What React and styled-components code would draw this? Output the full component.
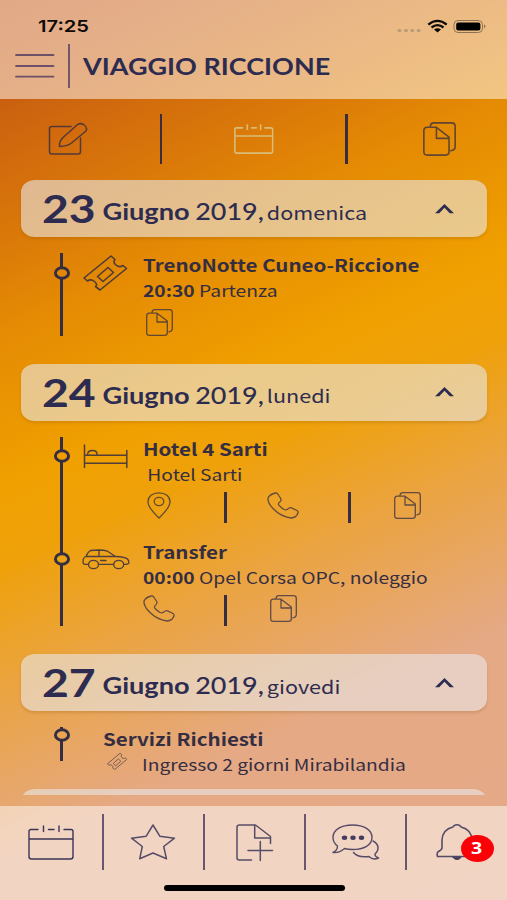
import React from "react";
import styled, { createGlobalStyle } from "styled-components";

const NAVY = "#2d2c50";
const INK = "#352e42";
const SOURCE = '"Noto Sans CJK SC", "Noto Sans", sans-serif';
const LATO = 'Lato, "Open Sans", sans-serif';

const GlobalStyle = createGlobalStyle`
  * { box-sizing: border-box; }
  body { margin: 0; overflow: hidden; }
`;

const Screen = styled.div`
  width: 507px;
  height: 900px;
  display: flex;
  flex-direction: column;
  overflow: hidden;
  color: ${NAVY};
  font-family: ${SOURCE};
  background: linear-gradient(155deg, #c4520f 0%, #ca6010 9%, #d6720b 18%, #e48a04 29%, #f0a000 43%, #efa10a 50%, #eaa446 62%, #e5a985 76%, #e5a988 100%);
`;

/* Wide lettering: glyphs are stretched horizontally from their left edge. */
const Wide = styled.span`
  display: block;
  width: max-content;
  white-space: pre;
  transform: scaleX(${(p) => p.$scale || 1.219});
  transform-origin: 0 50%;
`;

const Header = styled.header`
  height: 99px;
  flex: none;
  background: rgba(255, 255, 255, 0.5);
`;

const StatusBar = styled.div`
  height: 44px;
  padding: 15px 20px 0 38px;
  display: flex;
  justify-content: space-between;
  color: #0d0a08;
  font: 600 16.5px/23px Inter, sans-serif;
`;

const StatusIcons = styled.svg`
  width: 91px;
  height: 16px;
  margin-top: 3px;
`;

const TitleBar = styled.div`
  height: 44px;
  padding-left: 15px;
  display: flex;
  align-items: center;
`;

const HeaderRule = styled.div`
  width: 2px;
  height: 44px;
  margin: 0 13px 0 14px;
  background: #73566a;
`;

const Title = styled.h1`
  margin: 0;
  font: 700 22.15px/44px ${LATO};
  padding-top: 2px;
`;

const Tabs = styled.nav`
  height: 81px;
  flex: none;
  display: flex;
  align-items: center;
  padding: 0 50px 2px 48px;
`;

const TabRule = styled.div`
  width: 2.5px;
  height: 50px;
  background: #382d3c;
  margin: ${(p) => p.$margin};
`;

const List = styled.main`
  height: 615px;
  flex: none;
  overflow: hidden;
  padding: 0 20px 0 21px;
`;

const DayCard = styled.section`
  height: 57px;
  border-radius: 14px / 12px;
  background: rgba(231, 231, 231, 0.6);
  box-shadow: 0 2px 3px rgba(130, 80, 10, 0.22);
  display: flex;
  justify-content: space-between;
  padding: 0 32px 0 20.5px;
`;

const DateLine = styled(Wide)`
  height: 57px;
  line-height: 57px;
  font-family: ${LATO};
`;

const DayNumber = styled.span`
  font-size: 38px;
  font-weight: 700;
`;

const Month = styled.span`
  margin-left: 5.5px;
  font-size: 22.3px;
  line-height: 24px;
  font-weight: 700;
  vertical-align: 3px;
`;

const Year = styled.span`
  margin-left: 4.5px;
  font-size: 22.1px;
  line-height: 24px;
  font-weight: 500;
  vertical-align: 3px;
`;

const Weekday = styled.span`
  margin-left: 2.5px;
  font: 400 17.7px/20px ${SOURCE};
  vertical-align: 3.5px;
`;

const Caret = styled.svg`
  width: 21px;
  height: 12px;
  margin-top: 22.5px;
`;

const Items = styled.div`
  padding: 16px 0 ${(p) => p.$bottom}px 31.5px;
`;

const Item = styled.article`
  display: flex;
  height: ${(p) => p.$height}px;
`;

const Rail = styled.div`
  position: relative;
  flex: none;
  width: 18px;
  display: flex;
  justify-content: center;
  &::before {
    content: "";
    width: 3px;
    background: ${INK};
  }
`;

const RailNode = styled.svg`
  position: absolute;
  left: 0;
  top: ${(p) => p.$top}px;
  width: 18px;
  height: 14px;
`;

const Kind = styled.div`
  flex: none;
  width: 72.5px;
  padding: ${(p) => p.$top}px 0 0 12px;
`;

const Body = styled.div`
  margin: -1px 0 0 ${(p) => p.$indent || 0}px;
  color: ${INK};
`;

const Heading = styled(Wide).attrs({ as: "h2" })`
  margin: 0;
  height: 26px;
  font-size: 16.85px;
  font-weight: 700;
  line-height: 26px;
`;

const Detail = styled(Wide)`
  height: 25px;
  font-size: 15.8px;
  font-weight: 400;
  line-height: 25px;
  b { font-weight: 700; }
`;

const Service = styled.div`
  display: flex;
  gap: 15px;
  padding-left: 4px;
  > svg { margin-top: 1px; }
`;

const Actions = styled.div`
  display: flex;
  margin-top: 5.5px;
`;

const Action = styled.div`
  width: 32px;
  display: flex;
  justify-content: center;
`;

const ActionRule = styled.div`
  width: 3px;
  height: 31px;
  margin: 0 40.5px 0 48.5px;
  background: ${INK};
`;

const Glyph = styled.svg`
  display: block;
  flex: none;
  width: ${(p) => p.$w}px;
  height: ${(p) => p.$h}px;
  fill: none;
  stroke: ${(p) => p.$color || INK};
  stroke-width: ${(p) => p.$stroke || 1.3};
  stroke-linecap: round;
  stroke-linejoin: round;
  overflow: visible;
  opacity: ${(p) => p.$opacity || 0.85};
`;

const Footer = styled.footer`
  margin-top: auto;
  height: 94px;
  flex: none;
  background: rgba(255, 255, 255, 0.5);
`;

const FooterNav = styled.nav`
  display: grid;
  grid-template-columns: 103.5px repeat(3, 101px) 1fr;
  height: 72px;
  padding-top: 8px;
`;

const FooterSlot = styled.div`
  position: relative;
  height: 56px;
  display: flex;
  justify-content: center;
  align-items: center;
  border-right: ${(p) => (p.$last ? "0" : "2px solid #6a566e")};
`;

const Badge = styled.div`
  position: absolute;
  left: 54px;
  top: 20.5px;
  width: 33px;
  height: 27px;
  border-radius: 50%;
  background: #fb0007;
  color: #fff;
  display: flex;
  justify-content: center;
  font: 700 16px/26px "Open Sans", sans-serif;
  ${Wide} { transform-origin: 50% 50%; }
`;

const HomeIndicator = styled.div`
  width: 181px;
  height: 6px;
  margin: 7px 0 0 164px;
  border-radius: 3px;
  background: #000;
`;

const MenuIcon = () => (
  <Glyph viewBox="0 0 39 24" $w={39} $h={24} $color="#6d5068" $stroke={1.8} $opacity={1}>
    <path d="M1 1H38.5M1 12H38.5M1 22.7H38.5" />
  </Glyph>
);

const EditIcon = () => (
  <Glyph viewBox="0 0 40 34" $w={40} $h={34} $stroke={1.5} $opacity={0.8}>
    <path d="M23 4.500H4Q1.500 4.500 1.500 7V29.500Q1.500 32 4 32H30Q32.500 32 32.500 29.500V16" />
    <path d="M11.500 24.500Q11 19.500 15 15.500L29 3Q32 .5 35.500 2.500Q40 5.500 38 9L23.500 21Q20 24 11.500 24.500Z" />
  </Glyph>
);

const CalendarIcon = ({ w, h, color, stroke }) => (
  <Glyph viewBox="0 0 46 35" preserveAspectRatio="none" $w={w} $h={h} $color={color} $stroke={stroke} $opacity={1}>
    <path d="M10 4.500H3Q1 4.500 1 6.500V31.500Q1 34 3.500 34H42.500Q45 34 45 31.500V6.500Q45 4.500 43 4.500H36M20.500 4.500H26M1 14H45" />
    <path d="M15.500 1V6.500M31 1V6.500" />
  </Glyph>
);

const DocsIcon = ({ w = 27, h = 27, stroke, opacity = 0.75 }) => (
  <Glyph viewBox="0 0 27 27" preserveAspectRatio="none" $w={w} $h={h} $stroke={stroke} $opacity={opacity}>
    <path d="M6 3.500Q6.200.7 9 .7H23.500Q26.300.7 26.300 3.500V19.500Q26.300 22.500 22.800 22.800" />
    <path d="M3.200 4.200H11L21.300 12V23.700Q21.300 26.300 18.500 26.300H3.400Q.7 26.300.7 23.700V7Q.7 4.300 3.200 4.200ZM11 4.200V13H21.300" />
  </Glyph>
);

const TicketIcon = ({ w, h, stroke, opacity }) => (
  <Glyph viewBox="0 0 44 36" preserveAspectRatio="none" $w={w} $h={h} $stroke={stroke} $opacity={opacity}>
    <path d="M28 1L1 23L4.500 26Q8 23.500 11.500 26.500T12.500 31.500L17 35L43.500 13.500L40 10.500Q36.500 13 33 10T32 4.500Z" />
    <path d="M14.500 21.500L25 12.500L30.500 17.500L20 26.500Z" />
  </Glyph>
);

const BedIcon = () => (
  <Glyph viewBox="0 0 45 25" $w={45} $h={25} $stroke={1.5}>
    <path d="M1.500 1V23.500M43.800 6.500V23.500M1.500 11.200H43.800M1.500 19.300H43.800M4.500 11Q4.500 6.500 9.500 6.500T14 11" />
  </Glyph>
);

const CarIcon = () => (
  <Glyph viewBox="1 0 48 21" $w={48} $h={21}>
    <path d="M6.300 15.300H2.700Q1 15 1 12.500Q1 8.500 4 7.500Q6 2.800 8.500 1.500Q20 .2 25.500 2.200L33.500 7.500Q43.500 8 45.500 10Q47.500 12.500 46.500 14.500Q45.500 15.500 42 15.300M16.500 15.300H31.500M4 7.500H33.500M17 1.500V7.500M18.500 11.500H24" />
    <ellipse cx="11.500" cy="15.500" rx="5" ry="4.200" />
    <ellipse cx="36.700" cy="15.500" rx="5" ry="4.200" />
  </Glyph>
);

const PinIcon = () => (
  <Glyph viewBox="0 0 24 27" $w={24} $h={27} $opacity={0.75}>
    <path d="M12 26C8.500 22.500 1 16 1 9.800C1 4.500 5.500.8 12 .8S23 4.500 23 9.800C23 16 15.500 22.500 12 26Z" />
    <ellipse cx="12" cy="9.500" rx="4.800" ry="4.100" />
  </Glyph>
);

const PhoneIcon = () => (
  <Glyph viewBox="0 0 32 27" $w={32} $h={27} $opacity={0.75}>
    <path d="M8.500 1Q3 2 1 6Q.5 11 6 16.500Q14 24.800 24 26Q29.500 25.800 31 20.800Q31.500 19.500 30 18.500L24.500 15.800Q22.500 15.300 20.800 17Q19 18.300 17 17.500Q12.500 14.500 11.500 12.500Q11 11 13 9.700Q14.500 8.500 13.800 6.500L10.700 2Q9.800.8 8.500 1Z" />
  </Glyph>
);

const StarIcon = () => (
  <Glyph viewBox="0 0 46 36" $w={46} $h={36} $color="#3b3557" $stroke={1.5}>
    <path d="M23 1L29.800 12.200L44.500 14.200L33.700 22.500L36.500 34.800L23 29L9.700 34.800L12.300 22.500L1.500 14.200L16.200 12.200Z" />
  </Glyph>
);

const AddDocIcon = () => (
  <Glyph viewBox="0 0 37 37" $w={37} $h={37} $color="#3b3557" $stroke={1.5}>
    <path d="M15.500 36H3.500Q1 36 1 34V3Q1 1 3.500 1H19.500L34.500 12.500V19.500M18.700 1V14H34.500M24.300 17.500V36.500M12 26.500H36.500" />
  </Glyph>
);

const ChatIcon = () => (
  <Glyph viewBox="0 0 47 36" $w={47} $h={36} $color="#3b3557" $stroke={1.4}>
    <path d="M1 28.500Q5.500 26.500 5.500 22Q1 18.500 1 13.500C1 6 9 1 20.500 1S40 6 40 13.500S32 25.500 20.500 25.500Q16 25.500 12.500 24.500Q7.500 29 1 28.500Z" />
    <path d="M41 17Q46 19.500 46 24Q46 27.500 43 30Q42.500 32.500 46.500 34Q41 36.500 37 32.500Q26 34 21.500 28.500" />
    <g fill="#24234b" stroke="none">
      <ellipse cx="12.500" cy="13.800" rx="2.700" ry="2.200" />
      <ellipse cx="21" cy="13.800" rx="2.700" ry="2.200" />
      <ellipse cx="29.500" cy="13.800" rx="2.700" ry="2.200" />
    </g>
  </Glyph>
);

const BellIcon = () => (
  <Glyph viewBox="0 0 42 36" $w={42} $h={36} $color="#3b3557" $stroke={1.6}>
    <path d="M17 3Q18 .8 21 .8T25 3Q35.500 5.500 36 16V24Q36.500 26.500 40 28Q41.500 30 40.500 32.500H1.500Q.5 29.500 2 27.800Q5.800 26 6 24V16Q6.500 5.500 17 3Z" />
    <path d="M17 33.200H25Q24 35.500 21 35.500T17 33.200Z" fill="#24234b" stroke="#24234b" strokeWidth="1" />
  </Glyph>
);

const Node = ({ top = 12.5, fill }) => (
  <RailNode $top={top} viewBox="0 0 18 14">
    <ellipse cx="9" cy="7" rx="6.600" ry="5.200" fill={fill} stroke={INK} strokeWidth="2.900" />
  </RailNode>
);

const Day = ({ number, weekday }) => (
  <DayCard>
    <DateLine>
      <DayNumber>{number}</DayNumber>
      <Month>Giugno</Month>
      <Year>2019,</Year>
      <Weekday>{weekday}</Weekday>
    </DateLine>
    <Caret viewBox="0 0 21 12">
      <path d="M1 10.300L10.500 1L20 10.300H15.800L10.500 4.800L5.200 10.300Z" fill={NAVY} />
    </Caret>
  </DayCard>
);

const ActionRow = ({ icons }) => (
  <Actions>
    {icons.map((Icon, i) => (
      <React.Fragment key={i}>
        {i > 0 && <ActionRule />}
        <Action><Icon /></Action>
      </React.Fragment>
    ))}
  </Actions>
);

export default function App() {
  return (
    <>
      <GlobalStyle />
      <Screen>
        <Header>
          <StatusBar>
            <Wide>17:25</Wide>
            <StatusIcons viewBox="0 0 91 16">
              <g fill="#b99a73">
                <ellipse cx="3.500" cy="12.500" rx="2" ry="1.600" />
                <ellipse cx="10" cy="12.500" rx="2" ry="1.600" />
                <ellipse cx="16.300" cy="12.500" rx="2" ry="1.600" />
                <ellipse cx="22.600" cy="12.500" rx="2" ry="1.600" />
              </g>
              <g fill="none" stroke="#0d0a08" strokeWidth="2.300">
                <path d="M32.300 6.600Q41.500 -.8 50.700 6.600" />
                <path d="M35.500 9.500Q41.500 4.800 47.500 9.500" />
              </g>
              <path d="M38 11.600Q41.500 9 45 11.600L41.500 14.500Z" fill="#0d0a08" />
              <rect x="58" y="2.500" width="28.500" height="12" rx="4" fill="none" stroke="#8f7152" />
              <rect x="60.200" y="4.500" width="24.200" height="8" rx="2" fill="#000" />
              <path d="M88 6.300Q91 8.300 88 10.500Z" fill="#8f7152" />
            </StatusIcons>
          </StatusBar>
          <TitleBar>
            <MenuIcon />
            <HeaderRule />
            <Title><Wide>VIAGGIO RICCIONE</Wide></Title>
          </TitleBar>
        </Header>

        <Tabs>
          <EditIcon />
          <TabRule $margin="0 72px 0 71.5px" />
          <CalendarIcon w={39.5} h={30} color="#d8bd78" stroke={1.8} />
          <TabRule $margin="0 75.5px 0 71.5px" />
          <DocsIcon w={33} h={34} stroke={1.3} />
        </Tabs>

        <List>
          <Day number="23" weekday="domenica" />
          <Items $bottom={28}>
            <Item $height={82.5}>
              <Rail><Node fill="#e38708" /></Rail>
              <Kind $top={2}><TicketIcon w={44} h={36} stroke={1.6} /></Kind>
              <Body>
                <Heading>TrenoNotte Cuneo-Riccione</Heading>
                <Detail><b>20:30</b> Partenza</Detail>
                <ActionRow icons={[DocsIcon]} />
              </Body>
            </Item>
          </Items>

          <Day number="24" weekday="lunedi" />
          <Items $bottom={28}>
            <Item $height={103}>
              <Rail><Node fill="#f09e00" /></Rail>
              <Kind $top={7}><BedIcon /></Kind>
              <Body>
                <Heading>Hotel 4 Sarti</Heading>
                <Detail> Hotel Sarti</Detail>
                <ActionRow icons={[PinIcon, PhoneIcon, DocsIcon]} />
              </Body>
            </Item>
            <Item $height={86.5}>
              <Rail><Node fill="#eea216" /></Rail>
              <Kind $top={9}><CarIcon /></Kind>
              <Body>
                <Heading>Transfer</Heading>
                <Detail><b>00:00</b> Opel Corsa OPC, noleggio</Detail>
                <ActionRow icons={[PhoneIcon, DocsIcon]} />
              </Body>
            </Item>
          </Items>

          <Day number="27" weekday="giovedi" />
          <Items $bottom={28}>
            <Item $height={34}>
              <Rail><Node top={0.5} fill="#e9a552" /></Rail>
              <Body $indent={32}>
                <Heading>Servizi Richiesti</Heading>
                <Service>
                  <TicketIcon w={20} h={17} stroke={2} opacity={0.65} />
                  <Detail>Ingresso 2 giorni Mirabilandia</Detail>
                </Service>
              </Body>
            </Item>
          </Items>
          <DayCard />
        </List>

        <Footer>
          <FooterNav>
            <FooterSlot><CalendarIcon w={46} h={35} color="#3b3557" stroke={1.4} /></FooterSlot>
            <FooterSlot><StarIcon /></FooterSlot>
            <FooterSlot><AddDocIcon /></FooterSlot>
            <FooterSlot><ChatIcon /></FooterSlot>
            <FooterSlot $last>
              <BellIcon />
              <Badge><Wide>3</Wide></Badge>
            </FooterSlot>
          </FooterNav>
          <HomeIndicator />
        </Footer>
      </Screen>
    </>
  );
}
